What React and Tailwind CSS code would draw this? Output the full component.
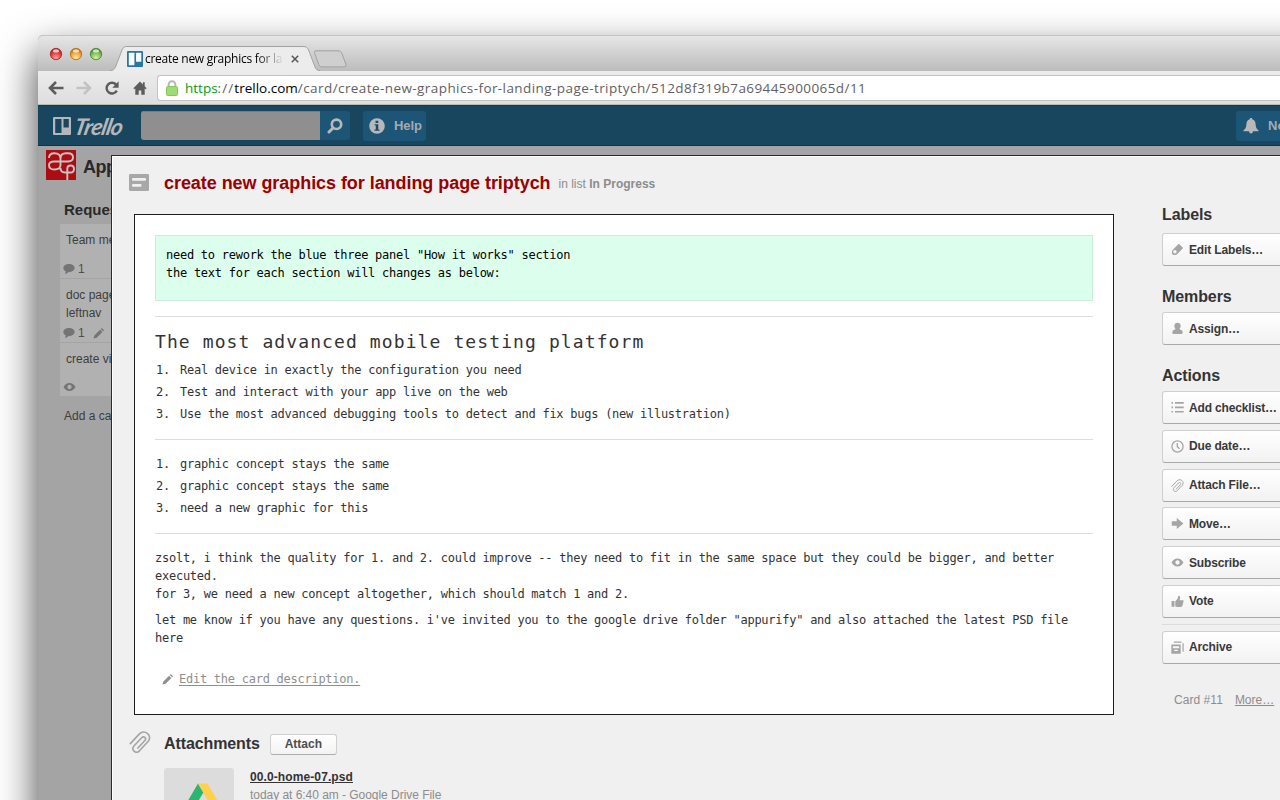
import React from "react";

const SANS = "font-['Liberation_Sans',Arial,sans-serif]";
const MONO = "font-['DejaVu_Sans_Mono',monospace]";
const HUMAN = "font-['Open_Sans',sans-serif]";

/* ---------- icons ---------- */

function Paperclip({ className }) {
  return (
    <svg viewBox="0 0 20 20" className={className} fill="none" stroke="currentColor" strokeWidth="1.5" strokeLinecap="round">
      <path d="M1.2 11.5 9.3 2.9c2.400-2.500 5.500-2.200 7.600-.5 2.300 2 2.400 4.900.4 7.200l-7.800 8.400c-1.500 1.500-3.600 1.500-4.900.3-1.400-1.300-1.400-3.200-.1-4.700l7-7.500c.9-.9 2.100-.9 2.900-.2.9.8.8 1.900 0 2.800l-6.300 6.800" />
    </svg>
  );
}

function Pencil({ className }) {
  return (
    <svg viewBox="0 0 12 12" className={className} fill="currentColor">
      <path d="M.4 11.600l1-3.200 5.700-5.700 2.300 2.300-5.800 5.700zM7.800 2l1-1 2.300 2.300-1 1z" />
    </svg>
  );
}

function Eye({ className }) {
  return (
    <svg viewBox="0 0 14 10" className={className}>
      <path fill="currentColor" fillRule="evenodd" d="M.6 5c1.600-2.700 3.700-4.200 6.400-4.200S11.800 2.300 13.400 5c-1.600 2.700-3.700 4.200-6.400 4.200S2.200 7.700.6 5zM7 2.700a2.300 2.300 0 1 0 0 4.600 2.300 2.300 0 0 0 0-4.600z" />
    </svg>
  );
}

function Bubble({ className }) {
  return (
    <svg viewBox="0 0 12 12" className={className} fill="currentColor">
      <path d="M6 1C2.800 1 .4 2.600.4 4.900c0 1.500.9 2.600 2.200 3.200L2.300 11.300l3.600-2.400c3.300 0 5.700-1.700 5.700-4S9.200 1 6 1z" />
    </svg>
  );
}

function Tag({ className }) {
  return (
    <svg viewBox="0 0 14 14" className={className}>
      <path fill="currentColor" fillRule="evenodd" d="M9 1.300l3.600 3.500c.4.400.4.800 0 1.200l-5.800 5.800c-.7.7-1.500 1-2.500 1H2.900C1.700 12.800 1 12 1 10.900V9.600c0-1 .3-1.700 1-2.400L7.800 1.300c.4-.4.800-.4 1.200 0zM4.200 7.600a1.900 1.900 0 1 0 0 3.800 1.900 1.900 0 0 0 0-3.800z" />
    </svg>
  );
}

function Person({ className }) {
  return (
    <svg viewBox="0 0 14 14" className={className} fill="currentColor">
      <path d="M7 .9c2 0 3.400 1.400 3.400 3.300 0 1.300-.5 2.300-1.200 3 .2.800.8 1.100 1.700 1.400 1.100.4 1.600 1.100 1.600 2.300v.7c0 .8-.5 1.300-1.300 1.300H2.800c-.8 0-1.300-.5-1.300-1.300v-.7c0-1.200.5-1.900 1.600-2.300.9-.3 1.500-.6 1.700-1.400-.7-.7-1.200-1.700-1.200-3C3.600 2.300 5 .9 7 .9z" />
    </svg>
  );
}

function Checklist({ className }) {
  return (
    <svg viewBox="0 0 14 14" className={className} fill="currentColor">
      <path d="M.5 1.200h1.700v1.700H.5zM.5 6h1.700v1.700H.5zM.5 10.800h1.700v1.700H.5zM4.300 1.200h9.400v1.700H4.300zM4.300 6h9.400v1.700H4.300zM4.300 10.800h9.400v1.700H4.300z" />
    </svg>
  );
}

function Clock({ className }) {
  return (
    <svg viewBox="0 0 14 14" className={className} fill="none" stroke="currentColor" strokeWidth="1.400">
      <circle cx="7" cy="7" r="6" />
      <path d="M6.800 3.200v4l2.400 2.200" />
    </svg>
  );
}

function ArrowRight({ className }) {
  return (
    <svg viewBox="0 0 14 14" className={className} fill="currentColor">
      <path d="M.8 4.700h5.400V1L13.400 7l-7.200 6V9.300H.8z" />
    </svg>
  );
}

function Thumb({ className }) {
  return (
    <svg viewBox="0 0 14 14" className={className} fill="currentColor">
      <path d="M.6 6.500h3.100v6.200H.6zM4.600 6.700c1.800-1.200 2.700-2.700 3-4.700.1-.9.600-1.300 1.300-1.100 1.100.3 1.200 2.400.4 4.800h3.200c.9 0 1.200.6 1 1.400l-1.200 4.600c-.2.800-.7 1.200-1.500 1.200H7c-.9 0-1.700-.4-2.400-.8z" />
    </svg>
  );
}

function Archive({ className }) {
  return (
    <svg viewBox="0 0 14 14" className={className}>
      <path fill="currentColor" fillRule="evenodd" d="M.4 3.800h10v9.900H.4zM2 5.700v2h6.800v-2zM3.400 9.300v1.500h4V9.300z" />
      <path fill="none" stroke="currentColor" strokeWidth="1.300" d="M3 1.300h8.300M13 2.300v9.300" />
    </svg>
  );
}

function CardIcon({ className }) {
  return (
    <svg viewBox="0 0 20 17" className={className}>
      <rect width="20" height="17" rx="1.200" fill="#a8a8a8" />
      <rect x="3" y="4" width="14" height="2.800" rx="1" fill="#f0f0f0" />
      <rect x="3" y="10" width="9.500" height="2.800" rx="1" fill="#f0f0f0" />
    </svg>
  );
}

/* ---------- browser chrome ---------- */

function TrafficLight({ id, dark, mid, light }) {
  return (
    <svg viewBox="0 0 14 14" className="h-[14px] w-[14px]">
      <defs>
        <radialGradient id={id} cx=".5" cy=".85" r=".75">
          <stop offset="0" stopColor={light} />
          <stop offset=".6" stopColor={mid} />
          <stop offset="1" stopColor={dark} />
        </radialGradient>
      </defs>
      <circle cx="7" cy="7" r="5.700" fill={`url(#${id})`} stroke={dark} strokeWidth=".9" />
      <ellipse cx="7" cy="3.900" rx="3" ry="1.700" fill="#fff" opacity=".7" />
    </svg>
  );
}

function TitleBar() {
  return (
    <div className="flex h-[36px] items-start rounded-tl-[5px] border-t border-[#c4c4c4] bg-gradient-to-b from-[#e6e6e6] to-[#bcbcbc]">
      <div className="mt-[11px] ml-[11px] flex gap-[6px]">
        <TrafficLight id="red" dark="#a9282a" mid="#e8413f" light="#ffa5a0" />
        <TrafficLight id="amber" dark="#b5731c" mid="#f2ab3c" light="#ffe9a0" />
        <TrafficLight id="green" dark="#4f8a2f" mid="#7fc257" light="#d4f5a8" />
      </div>
      <div className="relative mt-[10px] ml-[7px] h-[25px] w-[212px]">
        <svg viewBox="0 0 212 25" className="absolute inset-0 h-[25px] w-[212px]">
          <path d="M0 24.500c3 0 4.500-1 5.500-3.500L12 4c1.200-3 2.500-3.500 5-3.500h176c3 0 4.500 1 5.600 3.500L205 21c1 2.500 2 3.500 5 3.500V25H0z" fill="#ececec" />
          <path d="M0 24.500c3 0 4.500-1 5.500-3.500L12 4c1.200-3 2.500-3.500 5-3.500h176c3 0 4.500 1 5.600 3.500L205 21c1 2.500 2 3.500 5 3.500" fill="none" stroke="#a2a2a2" />
        </svg>
        <div className="relative flex h-[25px] items-center pl-[17px]">
          <svg viewBox="0 0 16 16" className="h-[16px] w-[16px] shrink-0">
            <rect width="16" height="16" rx="1" fill="#2a76a4" />
            <rect x="1.800" y="1.800" width="5.600" height="12.400" rx=".5" fill="#f8fbfd" />
            <rect x="9" y="1.800" width="5.300" height="9" rx=".5" fill="#f8fbfd" />
          </svg>
          <span className={`${HUMAN} ml-[2px] w-[139px] shrink-0 overflow-hidden bg-gradient-to-r from-black from-80% to-transparent bg-clip-text text-[12px] leading-[16px] font-medium tracking-[-0.27px] whitespace-nowrap text-transparent`}>
            create new graphics for la
          </span>
          <svg viewBox="0 0 8 8" className="ml-[7px] h-[8px] w-[8px] shrink-0" stroke="#555" strokeWidth="1.500">
            <path d="M.8.8l6.400 6.400M7.200.8L.8 7.200" />
          </svg>
        </div>
      </div>
      <svg viewBox="0 0 34 18" className="mt-[14px] -ml-[9px] h-[18px] w-[34px]">
        <path d="M3 .8h22c2 0 3 .6 3.800 2.400l4 10.800c.8 2-.2 2.900-2 2.900H9.500c-2 0-3-.7-3.700-2.400L1.600 3.400C1 1.800 1.200.8 3 .8z" fill="#cfcfcf" stroke="#a0a0a0" />
      </svg>
    </div>
  );
}

function Toolbar() {
  return (
    <div className="flex h-[34px] items-center border-b border-[#b9bdb8] bg-gradient-to-b from-[#ececec] to-[#dedede]">
      <svg viewBox="0 0 16 14" className="ml-[10px] h-[14px] w-[16px]" fill="none" stroke="#5c5c5c" strokeWidth="2.600">
        <path d="M15.500 7H2.500M8 1L2 7l6 6" />
      </svg>
      <svg viewBox="0 0 16 14" className="ml-[12px] h-[14px] w-[16px]" fill="none" stroke="#c2c2c2" strokeWidth="2.600">
        <path d="M.5 7h13M8 1l6 6-6 6" />
      </svg>
      <svg viewBox="0 0 16 16" className="ml-[12px] h-[16px] w-[16px]">
        <path d="M12.800 10.600A5.400 5.400 0 1 1 12.300 4.800" fill="none" stroke="#5c5c5c" strokeWidth="2.400" />
        <path d="M14.600 1.300v6.500H8.300z" fill="#5c5c5c" />
      </svg>
      <svg viewBox="0 0 14 14" className="ml-[13px] h-[14px] w-[14px]" fill="#5c5c5c">
        <path d="M7 .6L.4 7.200l1 1L2.300 7.500V13.700H5.700V9.500H8.300V13.700h3.400V7.500l.9.700 1-1-1.900-1.900V1.200H9.900v2.200z" />
      </svg>
      <div className="ml-[10px] flex h-[26px] flex-1 items-center rounded-l-[3px] border border-r-0 border-[#c3c3c3] bg-white">
        <svg viewBox="0 0 12 16" className="ml-[8px] h-[16px] w-[12px]">
          <path d="M2.600 7V4.600a3.400 3.400 0 0 1 6.800 0V7" fill="none" stroke="#b5b5b5" strokeWidth="1.900" />
          <rect x=".5" y="6.500" width="11" height="9" rx="1" fill="#9fdc73" stroke="#86c45e" />
        </svg>
        <span className={`${HUMAN} ml-[7px] flex text-[13.5px] leading-[18px] whitespace-nowrap text-[#5f5f5f]`}>
          <span className="font-medium text-[#0a9a14]">https</span>
          <span className="tracking-[1.1px]">://</span>
          <span className="font-medium text-black">trello.com</span>
          <span className="tracking-[0.42px]">/card/create-new-graphics-for-landing-page-triptych/512d8f319b7a69445900065d/11</span>
        </span>
      </div>
    </div>
  );
}

/* ---------- page behind the card window ---------- */

function TrelloHeader() {
  return (
    <div className="flex h-[41px] items-center border-y border-t-[#16384c] border-b-[#123449] bg-[#19465f]">
      <svg viewBox="0 0 18 18" className="ml-[15px] h-[18px] w-[18px]">
        <path fillRule="evenodd" fill="#b5b8ba" d="M1 0h16a1 1 0 0 1 1 1v16a1 1 0 0 1-1 1H1a1 1 0 0 1-1-1V1a1 1 0 0 1 1-1zm1.200 2v14h6.300V2zM10.500 2v8.500h5.300V2z" />
      </svg>
      <span className="ml-[4px] w-[54px] -skew-x-12 font-['Lato',sans-serif] text-[23px] leading-[24px] font-bold tracking-[-0.9px] text-[#b5b8ba] italic">Trello</span>
      <div className="ml-[12px] flex h-[29px] w-[209px] overflow-hidden rounded-[3px]">
        <div className="w-[179px] border-t border-[#7b7b7b] bg-[#8f8f8f]" />
        <div className="flex flex-1 items-center justify-center bg-[#1d5576]">
          <svg viewBox="0 0 16 16" className="h-[16px] w-[16px]" fill="none" stroke="#b8b8b8" strokeLinecap="round">
            <circle cx="9.500" cy="6.300" r="4.700" strokeWidth="2.600" />
            <path d="M5.800 10.200L2 14" strokeWidth="3" />
          </svg>
        </div>
      </div>
      <div className="ml-[13px] flex h-[30px] w-[63px] items-center rounded-[3px] bg-[#1d5576]">
        <svg viewBox="0 0 16 16" className="ml-[6px] h-[16px] w-[16px]">
          <circle cx="8" cy="8" r="7.800" fill="#b8b8b8" />
          <path d="M6.500 2.800h2.800v2.100H6.500zM5.600 6.200h3.700v5.200h1.200v1.400H5.500v-1.400h1.300V7.600H5.600z" fill="#1d4b66" />
        </svg>
        <span className={`${SANS} ml-[9px] text-[13px] leading-[16px] font-bold tracking-[-0.1px] text-[#a6abae]`}>Help</span>
      </div>
      <div className="ml-auto flex h-[30px] w-[44px] items-center overflow-hidden rounded-l-[3px] bg-[#1d5576]">
        <svg viewBox="0 0 16 16" className="ml-[7px] h-[16px] w-[16px] shrink-0" fill="#b8b8b8">
          <path d="M8 0c.8 0 1.300.5 1.300 1.200 2.200.7 3.200 2.500 3.300 5 .1 3.200 1 4.600 2.900 6.100v.9h-5.600c0 1.300-.8 2.300-1.900 2.300s-1.900-1-1.900-2.300H.5v-.9c1.900-1.500 2.800-2.900 2.900-6.100.1-2.500 1.100-4.300 3.300-5C6.700.5 7.200 0 8 0z" />
        </svg>
        <span className={`${SANS} ml-[9px] text-[13px] leading-[16px] font-bold text-[#a6abae]`}>No</span>
      </div>
    </div>
  );
}

function ListCard({ text, className, children }) {
  return (
    <div className={`bg-[#b1b1b1] px-[6px] text-[12px] leading-[18px] text-[#3d3d3d] ${className}`}>
      <div className="whitespace-pre">{text}</div>
      <div className="mt-auto flex h-[18px] items-center gap-[3px] text-[#747474]">{children}</div>
    </div>
  );
}

function Board() {
  return (
    <div className={`${SANS} w-[74px] overflow-hidden`}>
      <div className="flex items-center pt-[4px] pl-[8px]">
        <svg viewBox="0 0 30 30" className="h-[30px] w-[30px] shrink-0">
          <rect width="30" height="30" fill="#ab0d13" />
          <path
            d="M3 8C3 4.500 5 3.200 8.500 3.200c4 0 6 2 6 5.300V15c0 3-2.500 4.500-6 4.500S3 18 3 15.300 5 11.500 8 11.500h14c3.500 0 5-1.600 5-4.200s-1.500-4.100-5-4.100h-2c-3.500 0-5.500 2-5.500 5.300M21.300 30V18.700c0-2.200 1-3.200 3.300-3.200S28 17 28 19s-1.200 3.500-3.400 3.500H19c-2.500 0-4.500-1-4.500-4.500"
            fill="none"
            stroke="#c9c3c3"
            strokeWidth="1.900"
          />
        </svg>
        <span className="mt-[4px] ml-[7px] text-[18px] leading-[24px] font-bold tracking-[-0.5px] text-[#292929]">Appurify</span>
      </div>
      <div className="mt-[20px] pl-[26px] text-[15px] leading-[20px] font-bold text-[#292929]">Requests</div>
      <div className="mt-[4px] ml-[22px] flex flex-col gap-px">
        <ListCard className="flex h-[54px] flex-col pt-[7px]" text="Team meeting">
          <Bubble className="-ml-[3px] h-[12px] w-[12px] shrink-0" />
          <span className="text-[#4d4d4d]">1</span>
        </ListCard>
        <ListCard className="flex h-[63px] flex-col pt-[7px]" text={"doc page\nleftnav"}>
          <Bubble className="-ml-[3px] h-[12px] w-[12px] shrink-0" />
          <span className="text-[#4d4d4d]">1</span>
          <Pencil className="ml-[5px] h-[12px] w-[12px] shrink-0" />
        </ListCard>
        <ListCard className="flex h-[53px] flex-col pt-[7px]" text="create video">
          <Eye className="-ml-[3px] h-[10px] w-[13px] shrink-0" />
        </ListCard>
      </div>
      <div className="mt-[11px] pl-[26px] text-[12px] leading-[18px] whitespace-nowrap text-[#3d3d3d]">Add a card…</div>
    </div>
  );
}

/* ---------- card window ---------- */

function SideButton({ icon: Icon, label, className = "" }) {
  return (
    <button className={`flex h-[33px] w-[140px] shrink-0 items-center rounded-[3px] border border-[#cfcfcf] border-b-[#a9a9a9] bg-gradient-to-b from-white to-[#f2f2f2] text-[#a5a5a5] ${className}`}>
      <Icon className="ml-[8px] h-[13px] w-[13px]" />
      <span className="ml-[5px] text-[12px] leading-[16px] font-bold tracking-[-0.15px] text-[#393939]">{label}</span>
    </button>
  );
}

function Heading({ children, className = "" }) {
  return <h3 className={`text-[16px] leading-[20px] font-bold tracking-[-0.1px] text-[#333] ${className}`}>{children}</h3>;
}

function Sidebar() {
  return (
    <aside className="ml-[48px] w-[119px] shrink-0 overflow-hidden">
      <Heading>Labels</Heading>
      <SideButton className="mt-[8px]" icon={Tag} label="Edit Labels…" />
      <Heading className="mt-[21px]">Members</Heading>
      <SideButton className="mt-[5px]" icon={Person} label="Assign…" />
      <Heading className="mt-[21px]">Actions</Heading>
      <div className="mt-[5px] flex flex-col gap-[5.800px]">
        <SideButton icon={Checklist} label="Add checklist…" />
        <SideButton icon={Clock} label="Due date…" />
        <SideButton icon={Paperclip} label="Attach File…" />
        <SideButton icon={ArrowRight} label="Move…" />
        <SideButton icon={Eye} label="Subscribe" />
        <SideButton icon={Thumb} label="Vote" />
      </div>
      <div className="mt-[6px] h-px bg-[#dcdcdc]" />
      <SideButton className="mt-[6px]" icon={Archive} label="Archive" />
      <div className="mt-[27px] flex gap-[12px] pl-[12px] text-[12px] leading-[18px] whitespace-nowrap text-[#8c8c8c]">
        <span className="tracking-[0.05px]">Card #11</span>
        <span className="underline">More…</span>
      </div>
    </aside>
  );
}

function Steps({ items, className }) {
  return (
    <ol className={className}>
      {items.map((item, i) => (
        <li key={i} className="flex h-[22px] items-center">
          <span className="w-[24px]">{i + 1}.</span>
          <span>{item}</span>
        </li>
      ))}
    </ol>
  );
}

function Description() {
  return (
    <div className={`${MONO} h-[501px] w-[980px] border border-[#1c1c1c] bg-white px-[20px] pt-[20px] text-[12px] leading-[18px] tracking-[-0.255px] whitespace-pre text-[#333]`}>
      <div className="h-[66px] border border-[#c9efdb] bg-[#dcffed] px-[10px] pt-[10px] text-black">
        {'need to rework the blue three panel "How it works" section\nthe text for each section will changes as below:'}
      </div>
      <hr className="mt-[15px] border-[#dcdcdc]" />
      <h2 className="mt-[13px] text-[18px] leading-[24px] tracking-[1.1px]">The most advanced mobile testing platform</h2>
      <Steps
        className="mt-[5px] pl-[1px]"
        items={[
          "Real device in exactly the configuration you need",
          "Test and interact with your app live on the web",
          "Use the most advanced debugging tools to detect and fix bugs (new illustration)",
        ]}
      />
      <hr className="mt-[14px] border-[#dcdcdc]" />
      <Steps
        className="mt-[13px] pl-[1px]"
        items={["graphic concept stays the same", "graphic concept stays the same", "need a new graphic for this"]}
      />
      <hr className="mt-[14px] border-[#dcdcdc]" />
      <p className="mt-[15px]">
        {"zsolt, i think the quality for 1. and 2. could improve -- they need to fit in the same space but they could be bigger, and better\nexecuted.\nfor 3, we need a new concept altogether, which should match 1 and 2."}
      </p>
      <p className="mt-[8px]">
        {'let me know if you have any questions. i\'ve invited you to the google drive folder "appurify" and also attached the latest PSD file\nhere'}
      </p>
      <div className="mt-[23px] flex items-center pl-[7px] text-[#8f8f8f]">
        <Pencil className="h-[12px] w-[12px]" />
        <span className="ml-[5px] underline underline-offset-2">Edit the card description.</span>
      </div>
    </div>
  );
}

function Attachments() {
  return (
    <section>
      <div className="flex h-[22px] items-center">
        <Paperclip className="-mt-[4px] -ml-[5px] h-[22px] w-[22px] text-[#a5a5a5]" />
        <Heading className="ml-[13px]">Attachments</Heading>
        <button className="ml-[10px] h-[21px] w-[67px] rounded-[3px] border border-[#cfcfcf] border-b-[#adadad] bg-gradient-to-b from-white to-[#f3f3f3] text-[12px] leading-[18px] font-bold text-[#4d4d4d]">Attach</button>
      </div>
      <div className="mt-[13px] flex pl-[30px]">
        <div className="h-[70px] w-[70px] rounded-[3px] bg-[#dcdcdc] pt-[15px] pl-[20px]">
          <svg viewBox="0 0 38 34" className="h-[34px] w-[38px]">
            <path d="M14 .5L0 24.500l5 8.500L19.500 9.500z" fill="#2db56f" />
            <path d="M14 .5h9.500L37.500 24.500H28z" fill="#ffd04b" />
            <path d="M10 24.500h27.500l-5 8.500H5z" fill="#4688f1" />
          </svg>
        </div>
        <div className="ml-[16px] text-[12px] leading-[18px]">
          <div className="font-bold tracking-[0.1px] text-[#333] underline">00.0-home-07.psd</div>
          <div className="tracking-[-0.04px] text-[#8c8c8c]">today at 6:40 am - Google Drive File</div>
        </div>
      </div>
    </section>
  );
}

function CardWindow() {
  return (
    <div className={`${SANS} absolute top-[9px] left-[73px] h-[660px] w-[1180px] border border-[#2b2b2b] bg-[#f0f0f0] shadow-[inset_1px_1px_0_#fff]`}>
      <div className="flex h-[58px] items-center pb-[5px] pl-[17px]">
        <CardIcon className="h-[17px] w-[20px]" />
        <h1 className="ml-[15px] text-[18px] leading-[24px] font-bold tracking-[-0.057px] text-[#990000]">create new graphics for landing page triptych</h1>
        <p className="mt-[3px] ml-[8px] text-[12px] leading-[16px] text-[#8c8c8c]">
          in list <b>In Progress</b>
        </p>
      </div>
      <div className="flex pl-[22px]">
        <div className="w-[980px] shrink-0">
          <Description />
          <div className="mt-[18px]">
            <Attachments />
          </div>
        </div>
        <div className="-mt-[9px]">
          <Sidebar />
        </div>
      </div>
    </div>
  );
}

export default function App() {
  return (
    <main className="h-[800px] w-[1280px] overflow-hidden bg-white pt-[35px] pl-[38px]">
      <div className="h-[900px] w-[1400px] rounded-tl-[5px] shadow-[0_18px_40px_rgba(0,0,0,0.75)]">
        <div className="h-full w-[1242px] overflow-hidden rounded-tl-[5px] bg-[#a4a4a4]">
          <TitleBar />
          <Toolbar />
          <TrelloHeader />
          <div className="relative">
            <Board />
            <CardWindow />
          </div>
        </div>
      </div>
    </main>
  );
}
